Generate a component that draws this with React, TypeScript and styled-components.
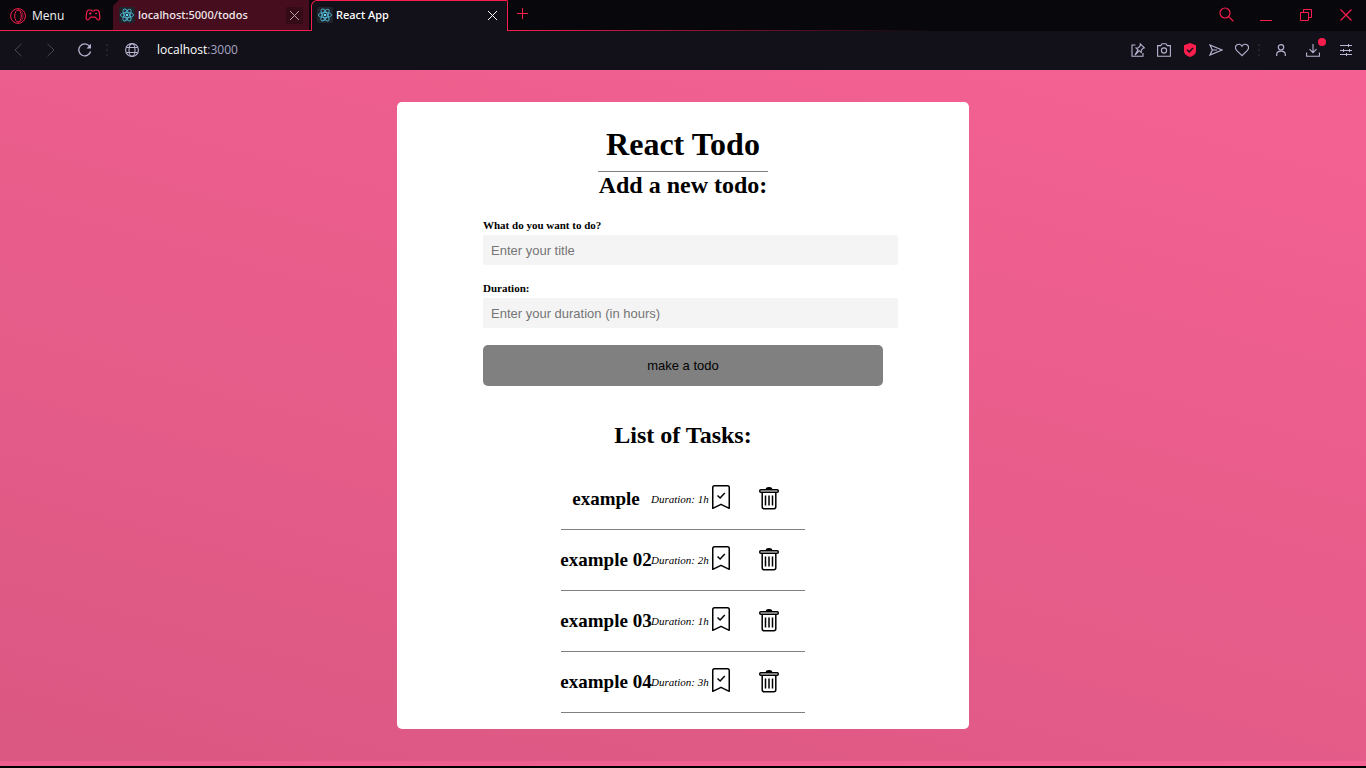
import React from "react";
import styled, { createGlobalStyle } from "styled-components";

const GlobalStyle = createGlobalStyle`
  *, *::before, *::after { box-sizing: border-box; }
  body {
    margin: 0;
    font-family: "Liberation Serif", "Times New Roman", serif;
    color: #000;
  }
  h1, h2, h3, p, ul { margin: 0; padding: 0; }
  button { border: 0; padding: 0; background: none; color: inherit; cursor: pointer; }
  svg { display: block; fill: none; stroke: currentColor; flex: none; }
`;

const accent = "#fa1e4e";

const Shell = styled.div`
  min-height: 100vh;
  display: flex;
  flex-direction: column;
  border-bottom: 2px solid #000;
`;

const TabStrip = styled.header`
  display: flex;
  height: 31px;
  background: #08070c;
  font: 500 11px/16px "Noto Sans", "Segoe UI", sans-serif;
  color: #fff;
`;

const StripStart = styled.div`
  display: flex;
  border-bottom: 1px solid ${accent};
`;

const MenuButton = styled.button`
  display: flex;
  align-items: center;
  gap: 6px;
  width: 85px;
  padding: 2px 0 0 10px;
  font: 12px/16px "Open Sans", "Segoe UI", sans-serif;
  color: #f2f2f4;
  svg { color: ${accent}; }
`;

const CornerButton = styled.button`
  width: 28px;
  color: ${accent};
`;

const BackgroundTab = styled.div`
  display: flex;
  align-items: center;
  gap: 3px;
  width: 196px;
  margin-right: 2px;
  padding: 0 6px;
  background: #450d1e;
  clip-path: polygon(6px 0, 100% 0, 100% 100%, 0 100%, 0 6px);
  color: #f3e9ec;
`;

const ActiveTab = styled.div`
  display: flex;
  align-items: center;
  gap: 3px;
  width: 197px;
  padding: 0 6px 2px 5px;
  background: #12111a;
  border: 1px solid ${accent};
  border-bottom: 0;
  border-radius: 6px 2px 0 0;
`;

const TabTitle = styled.span`
  flex: 1;
  white-space: nowrap;
`;

const CloseButton = styled.button<{ $shaded?: boolean }>`
  display: grid;
  place-items: center;
  width: 17px;
  height: 17px;
  background: ${(p) => (p.$shaded ? "#350b18" : "none")};
  color: ${(p) => (p.$shaded ? "#b3a0a7" : "#fff")};
`;

const StripEnd = styled.div`
  flex: 1;
  display: flex;
  justify-content: space-between;
  border-bottom: 1px solid;
  border-image: linear-gradient(90deg, ${accent}, #08070c 50%) 1;
  color: ${accent};
`;

const NewTabButton = styled.button`
  width: 29px;
  padding-bottom: 3px;
  display: grid;
  place-items: center;
`;

const WindowControls = styled.div`
  display: flex;
  button {
    width: 40px;
    display: grid;
    place-items: center;
  }
`;

const AddressBar = styled.nav`
  display: flex;
  align-items: center;
  height: 39px;
  padding: 0 12px 2px 10px;
  background: #12111a;
  color: #b8b3d0;
`;

const NavButton = styled.button<{ $dim?: boolean; $width?: number }>`
  position: relative;
  display: grid;
  place-items: center;
  width: ${(p) => p.$width ?? 26}px;
  height: 30px;
  color: ${(p) => (p.$dim ? "#4a4757" : "inherit")};
`;

const Dots = styled.span`
  width: 2px;
  height: 12px;
  background: repeating-linear-gradient(#24222e 0 2px, transparent 2px 5px);
`;

const Spacer = styled.span<{ $width: number }>`
  width: ${(p) => p.$width}px;
`;

const UrlText = styled.a`
  flex: 1;
  min-width: 0;
  padding-left: 12px;
  font: 12px/16px "Open Sans", "Segoe UI", sans-serif;
  color: #fff;
  text-decoration: none;
  span { color: #a9a4c0; }
`;

const Badge = styled.span`
  position: absolute;
  top: 3px;
  right: 0;
  width: 8px;
  height: 8px;
  border-radius: 50%;
  background: ${accent};
`;

const Page = styled.main`
  flex: 1;
  padding: 32px 16px 37px;
  background: linear-gradient(195deg, #f46192, #db5883) 0 0 / 100% calc(100% - 5px);
`;

const Card = styled.div`
  display: flex;
  flex-direction: column;
  align-items: center;
  width: 100%;
  max-width: 572px;
  margin: 0 auto;
  padding: 16px;
  background: #fff;
  border-radius: 5px;
`;

const Title = styled.h1`
  padding: 8px;
  border-bottom: 1px solid #808080;
  font-size: 32px;
  line-height: 37px;
`;

const SectionTitle = styled.h2`
  margin-bottom: 20px;
  font-size: 24px;
  line-height: 27px;
`;

const TodoForm = styled.form`
  display: flex;
  flex-direction: column;
  gap: 17px;
  width: 100%;
  max-width: 400px;
  margin-bottom: 36px;
`;

const Field = styled.label`
  display: flex;
  flex-direction: column;
  gap: 3px;
  font-size: 11px;
  line-height: 13px;
  font-weight: bold;
`;

const TextInput = styled.input`
  width: calc(100% + 15px);
  height: 30px;
  padding: 0 8px;
  border: 0;
  border-radius: 2px;
  background: #f4f4f4;
  font: 13px "Liberation Sans", Arial, sans-serif;
  &::placeholder { color: #757575; opacity: 1; }
`;

const SubmitButton = styled.button`
  height: 41px;
  border-radius: 5px;
  background: #808080;
  font: 13px "Liberation Sans", Arial, sans-serif;
`;

const TaskList = styled.ul`
  width: 100%;
  max-width: 244px;
  list-style: none;
`;

const TaskRow = styled.li`
  display: grid;
  grid-template-columns: 90px 59px 1fr;
  align-items: center;
  height: 61px;
  border-bottom: 1px solid #808080;
  white-space: nowrap;
`;

const TaskName = styled.h3`
  display: flex;
  justify-content: center;
  font-size: 19px;
  line-height: 22px;
`;

const TaskDuration = styled.p`
  font-size: 11px;
  line-height: 13px;
  font-style: italic;
`;

const TaskActions = styled.div`
  display: flex;
  gap: 26px;
  padding-bottom: 4px;
`;

const CrossIcon = () => (
  <svg width="11" height="11" viewBox="0 0 11 11"><path d="M1 1l9 9M10 1l-9 9" /></svg>
);

const OperaIcon = () => (
  <svg width="16" height="16" viewBox="0 0 16 16">
    <circle cx="8" cy="8" r="7.4" />
    <ellipse cx="8" cy="8" rx="3.3" ry="6" />
    <path d="M8 2c3 0 5 2.500 5 6s-2 6-5 6" strokeWidth=".6" />
  </svg>
);

const GamepadIcon = () => (
  <svg width="16" height="12" viewBox="0 0 16 12" strokeWidth="1.200">
    <path d="M4 1h2l.8 1h2.400L10 1h2c1.500 0 2 1 2.300 2.500l.5 4.500c.2 2-.6 3-1.600 3-1.400 0-2-2.800-3.200-2.800H6C4.800 8.200 4.200 11 2.800 11c-1 0-1.800-1-1.600-3l.5-4.500C2 2 2.500 1 4 1z" />
    <path d="M4 4.500h2.500M5.200 3.300v2.500M10 4.500h2" />
  </svg>
);

const ReactIcon = () => (
  <svg width="16" height="16" viewBox="0 0 16 16" strokeWidth=".9">
    <rect width="16" height="16" rx="2" fill="#20252b" stroke="none" />
    <g stroke="#4fb3cf">
      <ellipse cx="8" cy="8" rx="6.600" ry="2.600" />
      <ellipse cx="8" cy="8" rx="6.600" ry="2.600" transform="rotate(60 8 8)" />
      <ellipse cx="8" cy="8" rx="6.600" ry="2.600" transform="rotate(120 8 8)" />
    </g>
    <circle cx="8" cy="8" r="1.300" fill="#61dafb" stroke="none" />
  </svg>
);

const BookmarkIcon = () => (
  <svg width="22" height="26" viewBox="0 0 22 26" strokeWidth="1.500">
    <path d="M2.750 24.300V3.500c0-1 .7-1.750 1.750-1.750h13c1 0 1.750.7 1.750 1.750v20.800L11 20.300z" strokeLinejoin="round" />
    <path d="M7.500 11.500l2.600 2.500 4.700-5" />
  </svg>
);

const TrashIcon = () => (
  <svg width="22" height="26" viewBox="0 0 22 26" strokeWidth="1.500">
    <rect x="1.750" y="5.750" width="18.500" height="2.500" rx="1" />
    <path d="M8.500 5c0-1.300.7-1.300 2.500-1.300s2.500 0 2.500 1.300z" fill="currentColor" />
    <path d="M4.200 8.500v14.300c0 1.200.8 2 2 2h9.600c1.200 0 2-.8 2-2V8.500M7.500 11.500v10M11 11.500v10M14.500 11.500v10" />
  </svg>
);

const tasks = [
  { name: "example", hours: 1 },
  { name: "example 02", hours: 2 },
  { name: "example 03", hours: 1 },
  { name: "example 04", hours: 3 },
];

function BrowserTabs() {
  return (
    <TabStrip>
      <StripStart>
        <MenuButton><OperaIcon />Menu</MenuButton>
        <CornerButton aria-label="Corner"><GamepadIcon /></CornerButton>
        <BackgroundTab>
          <ReactIcon />
          <TabTitle>localhost:5000/todos</TabTitle>
          <CloseButton $shaded aria-label="Close tab"><CrossIcon /></CloseButton>
        </BackgroundTab>
      </StripStart>
      <ActiveTab>
        <ReactIcon />
        <TabTitle>React App</TabTitle>
        <CloseButton aria-label="Close tab"><CrossIcon /></CloseButton>
      </ActiveTab>
      <StripEnd>
        <NewTabButton aria-label="New tab">
          <svg width="11" height="11" viewBox="0 0 11 11"><path d="M5.500 0v11M0 5.500h11" /></svg>
        </NewTabButton>
        <WindowControls>
          <button aria-label="Search tabs">
            <svg width="15" height="17" viewBox="0 0 15 17" strokeWidth="1.200"><circle cx="6" cy="6" r="5" /><path d="M9.600 9.600l4.800 4.600" /></svg>
          </button>
          <button aria-label="Minimize">
            <svg width="12" height="12" viewBox="0 0 12 12"><path d="M0 11.500h12" /></svg>
          </button>
          <button aria-label="Restore">
            <svg width="12" height="12" viewBox="0 0 12 12"><path d="M.5 3.500h8v8h-8zM3.500 3.500v-3h8v8h-3" /></svg>
          </button>
          <button aria-label="Close">
            <svg width="12" height="12" viewBox="0 0 12 12"><path d="M.5.5l11 11M11.500.5l-11 11" strokeWidth="1.200" /></svg>
          </button>
        </WindowControls>
      </StripEnd>
    </TabStrip>
  );
}

function BrowserAddressBar() {
  return (
    <AddressBar>
      <NavButton $dim $width={16} aria-label="Back">
        <svg width="8" height="14" viewBox="0 0 8 14"><path d="M7.500.8L1 7l6.500 6.200" /></svg>
      </NavButton>
      <Spacer $width={17} />
      <NavButton $dim $width={16} aria-label="Forward">
        <svg width="8" height="14" viewBox="0 0 8 14"><path d="M.5.8L7 7 .5 13.200" /></svg>
      </NavButton>
      <Spacer $width={17} />
      <NavButton $width={18} aria-label="Reload">
        <svg width="14" height="14" viewBox="0 0 14 14" strokeWidth="1.300">
          <path d="M12.600 8.500A6 6 0 1 1 11.500 3.200" />
          <path d="M13 .8v4.700H8.500z" fill="currentColor" stroke="none" />
        </svg>
      </NavButton>
      <Spacer $width={12} />
      <Dots />
      <Spacer $width={16} />
      <NavButton $width={16} aria-label="Site information">
        <svg width="14" height="14" viewBox="0 0 14 14" strokeWidth="1.100">
          <circle cx="7" cy="7" r="6.400" />
          <ellipse cx="7" cy="7" rx="3" ry="6.400" />
          <path d="M1.500 4.500h11M1.500 9.500h11" />
        </svg>
      </NavButton>
      <Spacer $width={5} />
      <UrlText href="#">localhost<span>:3000</span></UrlText>
      <NavButton aria-label="Edit page">
        <svg width="14" height="14" viewBox="0 0 14 14" strokeWidth="1.100">
          <path d="M4.500 2H1v11.300h11V10" />
          <path d="M9.300.9l4 4-1.200.3-1.700 1.900-.2 2.500-2-1.900L4 12l3-5.200-2-1.900 2.500-.2 1.700-2z" />
        </svg>
      </NavButton>
      <NavButton aria-label="Snapshot">
        <svg width="14" height="14" viewBox="0 0 14 14" strokeWidth="1.100">
          <path d="M.6 2.600h3.200L5 .8h4l1.200 1.800h3.200v10.600H.6z" />
          <circle cx="7" cy="7.500" r="2.600" />
        </svg>
      </NavButton>
      <NavButton aria-label="Ad blocker">
        <svg width="12" height="14" viewBox="0 0 12 14">
          <path d="M6 0l6 2.200V8c0 3-2.500 4.700-6 6-3.500-1.300-6-3-6-6V2.200z" fill={accent} stroke="none" />
          <path d="M3 6.700l2.300 2.200L9 5" stroke="#12111a" strokeWidth="1.500" />
        </svg>
      </NavButton>
      <NavButton aria-label="Send to device">
        <svg width="14" height="12" viewBox="0 0 14 12" strokeWidth="1.200">
          <path d="M1 1l12 5-12 5 2.300-5zM3.300 6H8" />
        </svg>
      </NavButton>
      <NavButton aria-label="Add to bookmarks">
        <svg width="14" height="14" viewBox="0 0 15 14" strokeWidth="1.200">
          <path d="M7.500 13L2 7.700C.2 5.800.3 3.300 1.600 1.900 3.300.2 6.200.5 7.500 3 8.800.5 11.700.2 13.400 1.900c1.300 1.400 1.400 3.900-.4 5.800z" />
        </svg>
      </NavButton>
      <Spacer $width={3} />
      <Dots />
      <Spacer $width={8} />
      <NavButton aria-label="Profile">
        <svg width="10" height="12" viewBox="0 0 10 12" strokeWidth="1.200">
          <circle cx="5" cy="3.300" r="2.700" />
          <path d="M.7 12V10.500C.7 8.300 2 7.200 5 7.200s4.300 1.100 4.300 3.300V12" />
        </svg>
      </NavButton>
      <Spacer $width={6} />
      <NavButton aria-label="Downloads">
        <svg width="14" height="14" viewBox="0 0 14 14" strokeWidth="1.100">
          <path d="M7 1v8.500M3.500 6.200L7 9.700l3.500-3.500M.6 9.500v3.800h12.800V9.500" />
        </svg>
        <Badge />
      </NavButton>
      <Spacer $width={12} />
      <NavButton $width={16} aria-label="Easy setup">
        <svg width="12" height="12" viewBox="0 0 12 12">
          <path d="M0 1.500h12M0 6.500h12M0 10.500h12M8.500 0v3M3.500 5v3M9.500 5v3M6.500 9v3" />
        </svg>
      </NavButton>
    </AddressBar>
  );
}

export default function App() {
  return (
    <>
      <GlobalStyle />
      <Shell>
        <BrowserTabs />
        <BrowserAddressBar />
        <Page>
          <Card>
            <Title>React Todo</Title>
            <SectionTitle>Add a new todo:</SectionTitle>
            <TodoForm onSubmit={(e) => e.preventDefault()}>
              <Field>
                What do you want to do?
                <TextInput type="text" placeholder="Enter your title" />
              </Field>
              <Field>
                Duration:
                <TextInput type="text" placeholder="Enter your duration (in hours)" />
              </Field>
              <SubmitButton type="submit">make a todo</SubmitButton>
            </TodoForm>
            <SectionTitle>List of Tasks:</SectionTitle>
            <TaskList>
              {tasks.map((task) => (
                <TaskRow key={task.name}>
                  <TaskName>{task.name}</TaskName>
                  <TaskDuration>Duration: {task.hours}h</TaskDuration>
                  <TaskActions>
                    <button aria-label={`Complete ${task.name}`}><BookmarkIcon /></button>
                    <button aria-label={`Delete ${task.name}`}><TrashIcon /></button>
                  </TaskActions>
                </TaskRow>
              ))}
            </TaskList>
          </Card>
        </Page>
      </Shell>
    </>
  );
}
